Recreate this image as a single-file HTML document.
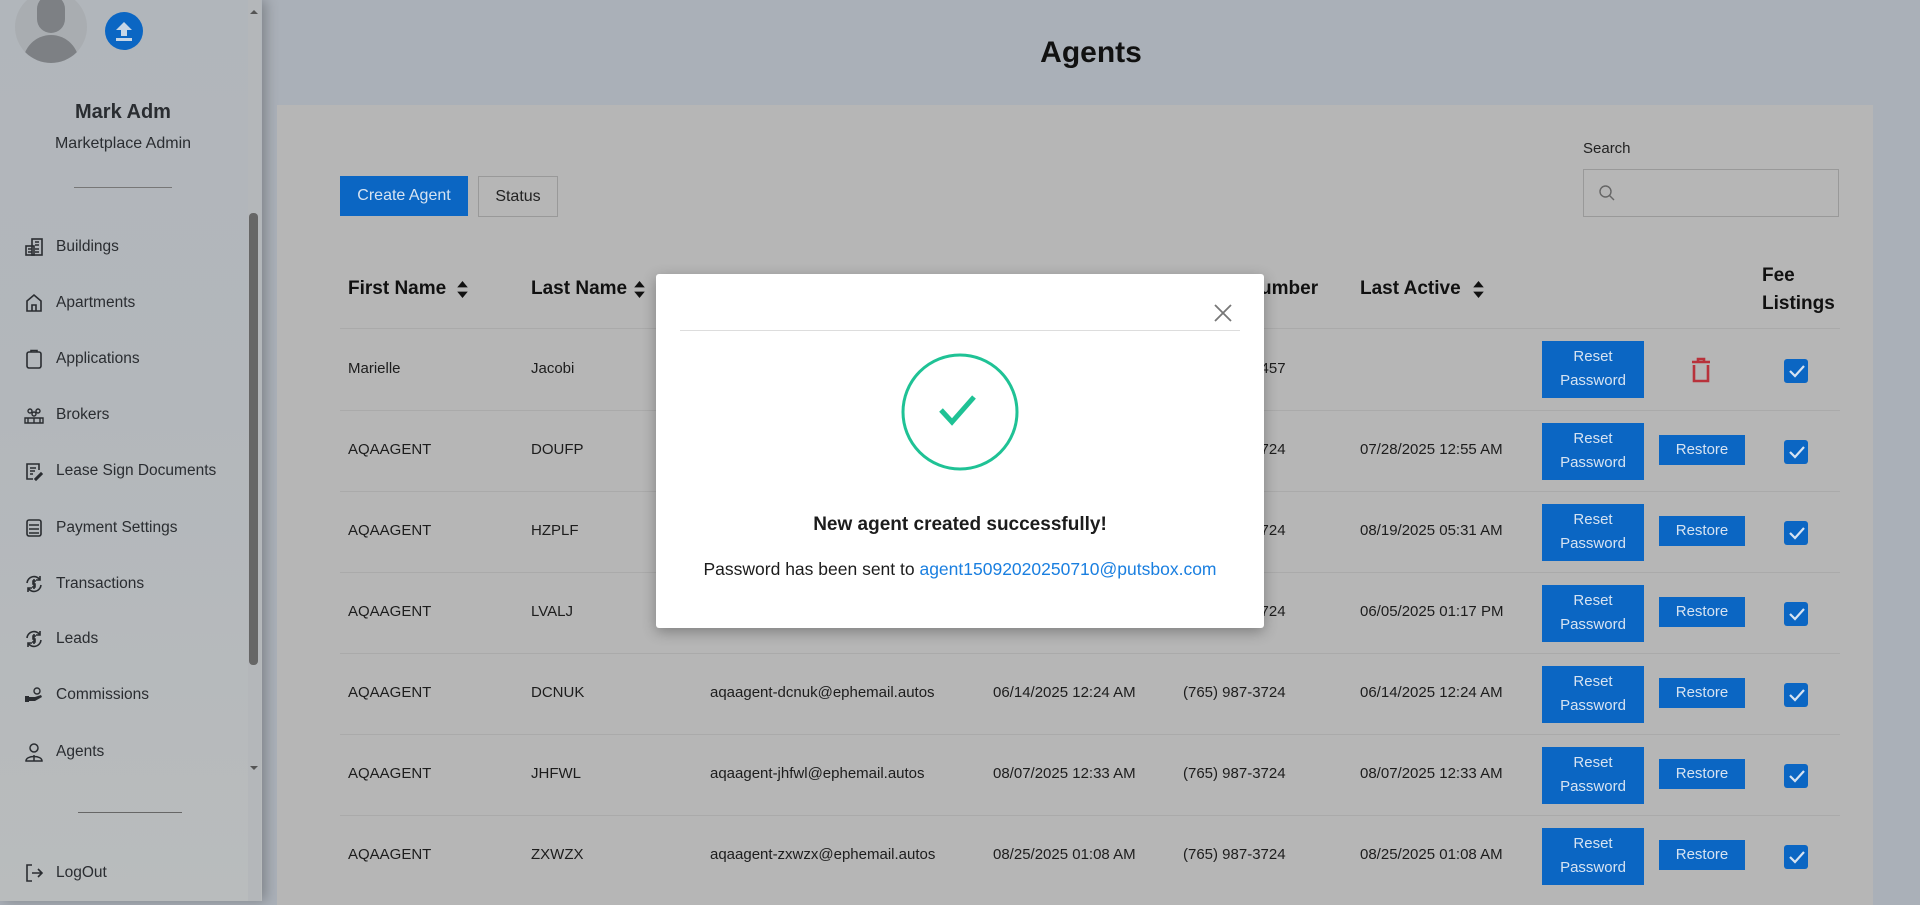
<!DOCTYPE html>
<html><head><meta charset="utf-8"><style>
*{box-sizing:border-box;margin:0;padding:0}
body{width:1920px;height:901px;overflow:hidden;background:#aab0b8;font-family:"Liberation Sans",sans-serif;color:#1c1c1c;position:relative}
.sb{position:absolute;left:0;top:0;width:262px;height:901px;background:linear-gradient(180deg,#b1b6bb 0%,#b3b7bb 45%,#b9bcbd 100%);box-shadow:4px 0 12px rgba(0,0,0,.25)}
.abs{position:absolute}
.mi{position:absolute;left:24px;font-size:15.5px;color:#2a2d31;display:flex;align-items:center}
.mi svg{width:20px;height:20px;margin-right:12px}
.card{position:absolute;left:277px;top:105px;width:1596px;height:800px;background:#b6b6b6}
.th{position:absolute;top:278px;font-size:19px;font-weight:bold;color:#111}
.td{position:absolute;font-size:15px;color:#1d1d1d}
.btn{position:absolute;background:#0b66c3;color:#d6e3f2;font-size:15px;text-align:center}
.rp{width:102px;height:57px;line-height:24px;padding-top:4px}
.rs{width:86px;height:30px;line-height:30px}
.cb{position:absolute;width:24px;height:24px;background:#0b66c3;border-radius:3px}
.hl{position:absolute;left:340px;width:1500px;height:1px;background:#aaa}
</style></head><body>
<div class="sb">
 <div class="abs" style="left:15px;top:-9px;width:72px;height:72px;border-radius:50%;background:#a9adb1;overflow:hidden">
  <div class="abs" style="left:22px;top:4px;width:28px;height:38px;border-radius:14px;background:#7d8084"></div>
  <div class="abs" style="left:8px;top:44px;width:56px;height:40px;border-radius:28px 28px 0 0;background:#7d8084"></div>
 </div>
 <div class="abs" style="left:105px;top:12px;width:38px;height:38px;border-radius:50%;background:#0b66c3">
  <svg width="38" height="38" viewBox="0 0 38 38"><path d="M19 10 L27 18 H22 V24 H16 V18 H11 Z" fill="#c7d6e6"/><rect x="11" y="26" width="16" height="3" fill="#c7d6e6"/></svg>
 </div>
 <div class="abs" style="left:0;width:246px;top:101px;text-align:center;font-size:20px;font-weight:bold;color:#2a2d31">Mark Adm</div>
 <div class="abs" style="left:0;width:246px;top:135px;text-align:center;font-size:16px;color:#2a2d31">Marketplace Admin</div>
 <div class="abs" style="left:74px;top:187px;width:98px;height:1px;background:#777"></div>
 <div class="mi" style="top:237px"><svg viewBox="0 0 20 20" fill="none" stroke="#2a2d31" stroke-width="1.6"><rect x="2" y="9" width="8" height="9"/><rect x="8" y="2" width="10" height="16"/><path d="M11 5h4M11 8h4M4 12h4M4 15h4M11 12h4M11 15h4"/></svg>Buildings</div>
 <div class="mi" style="top:293px"><svg viewBox="0 0 20 20" fill="none" stroke="#2a2d31" stroke-width="1.6"><path d="M3 18V8L10 2L17 8V18ZM8 18V12H12V18"/></svg>Apartments</div>
 <div class="mi" style="top:349px"><svg viewBox="0 0 20 20" fill="none" stroke="#2a2d31" stroke-width="1.6"><rect x="3" y="3" width="14" height="16" rx="2"/><path d="M7 3V1.5H13V3"/></svg>Applications</div>
 <div class="mi" style="top:405px"><svg viewBox="0 0 20 20" fill="none" stroke="#2a2d31" stroke-width="1.4"><circle cx="6" cy="6" r="2"/><circle cx="14" cy="6" r="2"/><circle cx="10" cy="9" r="2"/><path d="M1 18V13H19V18ZM4 13V18M10 13V18M16 13V18"/></svg>Brokers</div>
 <div class="mi" style="top:461px"><svg viewBox="0 0 20 20" fill="none" stroke="#2a2d31" stroke-width="1.6"><path d="M15 9V3H3V18H9M6 7H12M6 10H11M6 13H9M11 18L17 12L18 13L12 19Z"/></svg>Lease Sign Documents</div>
 <div class="mi" style="top:518px"><svg viewBox="0 0 20 20" fill="none" stroke="#2a2d31" stroke-width="1.6"><rect x="3" y="2" width="14" height="16" rx="2"/><path d="M5 7H15M5 11H15M5 15H15"/></svg>Payment Settings</div>
 <div class="mi" style="top:574px"><svg viewBox="0 0 20 20" fill="none" stroke="#2a2d31" stroke-width="1.6"><path d="M3 9A7 7 0 0 1 16 6M17 11A7 7 0 0 1 4 14M16 2V6H12M4 18V14H8M12 7H9V10H11V13H8M10 5V15"/></svg>Transactions</div>
 <div class="mi" style="top:629px"><svg viewBox="0 0 20 20" fill="none" stroke="#2a2d31" stroke-width="1.6"><path d="M3 9A7 7 0 0 1 16 6M17 11A7 7 0 0 1 4 14M16 2V6H12M4 18V14H8M12 7H9V10H11V13H8M10 5V15"/></svg>Leads</div>
 <div class="mi" style="top:685px"><svg viewBox="0 0 20 20" fill="#2a2d31"><rect x="1" y="11" width="4" height="6"/><path d="M5 12H11L17 10L18 12L11 16H5Z"/><circle cx="13" cy="6" r="3" fill="none" stroke="#2a2d31" stroke-width="1.4"/></svg>Commissions</div>
 <div class="mi" style="top:742px"><svg viewBox="0 0 20 20" fill="none" stroke="#2a2d31" stroke-width="1.5"><circle cx="10" cy="6" r="4"/><path d="M2 19C2 13 18 13 18 19ZM10 13V19"/></svg>Agents</div>
 <div class="abs" style="left:78px;top:812px;width:104px;height:1px;background:#666"></div>
 <div class="mi" style="top:863px"><svg viewBox="0 0 20 20" fill="none" stroke="#2a2d31" stroke-width="1.6"><path d="M8 2H3V18H8M8 10H18M14 6L18 10L14 14"/></svg>LogOut</div>
 <div class="abs" style="left:248px;top:0;width:13px;height:901px;background:#b4b7ba"></div>
 <div class="abs" style="left:249px;top:213px;width:9px;height:452px;border-radius:4px;background:#666"></div>
 <div class="abs" style="left:250px;top:6px;width:0;height:0;border:4px solid transparent;border-bottom-color:#555"></div>
 <div class="abs" style="left:250px;top:766px;width:0;height:0;border:4px solid transparent;border-top-color:#555"></div>
</div>
<div class="abs" style="left:262px;width:1658px;top:36px;text-align:center;font-size:30px;font-weight:bold;color:#111">Agents</div>
<div class="card"></div>
<div class="btn" style="left:340px;top:176px;width:128px;height:40px;line-height:40px;font-size:16px">Create Agent</div>
<div class="abs" style="left:478px;top:176px;width:80px;height:41px;border:1px solid #999;text-align:center;line-height:39px;font-size:16px;color:#222">Status</div>
<div class="abs" style="left:1583px;top:140px;font-size:15px;color:#222">Search</div>
<div class="abs" style="left:1583px;top:169px;width:256px;height:48px;border:1px solid #999"><svg class="abs" style="left:14px;top:14px" width="18" height="18" viewBox="0 0 18 18" fill="none" stroke="#666" stroke-width="1.4"><circle cx="7.5" cy="7.5" r="5.5"/><path d="M11.5 11.5L16 16"/></svg></div>

<div class="th" style="left:348px">First Name</div>
<div class="th" style="left:531px">Last Name</div>
<div class="th" style="left:1183px">Phone Number</div>
<div class="th" style="left:1360px">Last Active</div>
<div class="th" style="left:1762px;top:262px;line-height:28px">Fee<br>Listings</div>
<svg class="abs" style="left:456px;top:280px" width="13" height="19" viewBox="0 0 12 18" fill="#111"><path d="M6 1L11 7H1ZM6 17L11 11H1Z"/></svg>
<svg class="abs" style="left:633px;top:280px" width="13" height="19" viewBox="0 0 12 18" fill="#111"><path d="M6 1L11 7H1ZM6 17L11 11H1Z"/></svg>
<svg class="abs" style="left:1472px;top:280px" width="13" height="19" viewBox="0 0 12 18" fill="#111"><path d="M6 1L11 7H1ZM6 17L11 11H1Z"/></svg>
<div class="hl" style="top:328px"></div>
<div class="hl" style="top:410px"></div><div class="hl" style="top:491px"></div><div class="hl" style="top:572px"></div><div class="hl" style="top:653px"></div><div class="hl" style="top:734px"></div><div class="hl" style="top:815px"></div>

<div class="td" style="left:348px;top:360px">Marielle</div><div class="td" style="left:531px;top:360px">Jacobi</div><div class="td" style="left:1183px;top:360px">(765) 987-6457</div>
<div class="btn rp" style="left:1542px;top:341px">Reset<br>Password</div>
<svg class="abs" style="left:1690px;top:357px" width="22" height="26" viewBox="0 0 22 26" fill="none" stroke="#b8323b" stroke-width="2.6"><path d="M2 5H20M8 5V2H14V5M4 8V24H18V8"/></svg>
<div class="cb" style="left:1784px;top:359px"></div>

<div class="td" style="left:348px;top:441px">AQAAGENT</div><div class="td" style="left:531px;top:441px">DOUFP</div><div class="td" style="left:1183px;top:441px">(765) 987-3724</div><div class="td" style="left:1360px;top:441px">07/28/2025 12:55 AM</div>
<div class="btn rp" style="left:1542px;top:423px">Reset<br>Password</div><div class="btn rs" style="left:1659px;top:435px">Restore</div><div class="cb" style="left:1784px;top:440px"></div>

<div class="td" style="left:348px;top:522px">AQAAGENT</div><div class="td" style="left:531px;top:522px">HZPLF</div><div class="td" style="left:1183px;top:522px">(765) 987-3724</div><div class="td" style="left:1360px;top:522px">08/19/2025 05:31 AM</div>
<div class="btn rp" style="left:1542px;top:504px">Reset<br>Password</div><div class="btn rs" style="left:1659px;top:516px">Restore</div><div class="cb" style="left:1784px;top:521px"></div>

<div class="td" style="left:348px;top:603px">AQAAGENT</div><div class="td" style="left:531px;top:603px">LVALJ</div><div class="td" style="left:1183px;top:603px">(765) 987-3724</div><div class="td" style="left:1360px;top:603px">06/05/2025 01:17 PM</div>
<div class="btn rp" style="left:1542px;top:585px">Reset<br>Password</div><div class="btn rs" style="left:1659px;top:597px">Restore</div><div class="cb" style="left:1784px;top:602px"></div>

<div class="td" style="left:348px;top:684px">AQAAGENT</div><div class="td" style="left:531px;top:684px">DCNUK</div><div class="td" style="left:710px;top:684px">aqaagent-dcnuk@ephemail.autos</div><div class="td" style="left:993px;top:684px">06/14/2025 12:24 AM</div><div class="td" style="left:1183px;top:684px">(765) 987-3724</div><div class="td" style="left:1360px;top:684px">06/14/2025 12:24 AM</div>
<div class="btn rp" style="left:1542px;top:666px">Reset<br>Password</div><div class="btn rs" style="left:1659px;top:678px">Restore</div><div class="cb" style="left:1784px;top:683px"></div>

<div class="td" style="left:348px;top:765px">AQAAGENT</div><div class="td" style="left:531px;top:765px">JHFWL</div><div class="td" style="left:710px;top:765px">aqaagent-jhfwl@ephemail.autos</div><div class="td" style="left:993px;top:765px">08/07/2025 12:33 AM</div><div class="td" style="left:1183px;top:765px">(765) 987-3724</div><div class="td" style="left:1360px;top:765px">08/07/2025 12:33 AM</div>
<div class="btn rp" style="left:1542px;top:747px">Reset<br>Password</div><div class="btn rs" style="left:1659px;top:759px">Restore</div><div class="cb" style="left:1784px;top:764px"></div>

<div class="td" style="left:348px;top:846px">AQAAGENT</div><div class="td" style="left:531px;top:846px">ZXWZX</div><div class="td" style="left:710px;top:846px">aqaagent-zxwzx@ephemail.autos</div><div class="td" style="left:993px;top:846px">08/25/2025 01:08 AM</div><div class="td" style="left:1183px;top:846px">(765) 987-3724</div><div class="td" style="left:1360px;top:846px">08/25/2025 01:08 AM</div>
<div class="btn rp" style="left:1542px;top:828px">Reset<br>Password</div><div class="btn rs" style="left:1659px;top:840px">Restore</div><div class="cb" style="left:1784px;top:845px"></div>

<svg class="abs" style="left:0;top:0" width="1920" height="901">
 <g fill="none" stroke="#d6e3f2" stroke-width="2.2">
  <path d="M1790 371l5 5 9-10"/><path d="M1790 452l5 5 9-10"/><path d="M1790 533l5 5 9-10"/><path d="M1790 614l5 5 9-10"/><path d="M1790 695l5 5 9-10"/><path d="M1790 776l5 5 9-10"/><path d="M1790 857l5 5 9-10"/>
 </g>
</svg>

<div class="abs" style="left:656px;top:274px;width:608px;height:354px;background:#fff;border-radius:3px;box-shadow:0 4px 14px rgba(0,0,0,.3)">
 <svg class="abs" style="left:558px;top:30px" width="18" height="18" viewBox="0 0 18 18" stroke="#777" stroke-width="1.8"><path d="M1 1L17 17M17 1L1 17"/></svg>
 <div class="abs" style="left:24px;top:56px;width:560px;height:1px;background:#ddd"></div>
 <svg class="abs" style="left:244px;top:78px" width="120" height="120" viewBox="0 0 120 120" fill="none" stroke="#1fc295" stroke-width="3"><circle cx="60" cy="60" r="57"/><path d="M41 58L52 70L74 45" stroke-width="5"/></svg>
 <div class="abs" style="left:0;width:608px;top:240px;text-align:center;font-size:19px;font-weight:bold;color:#1c1c1c">New agent created successfully!</div>
 <div class="abs" style="left:0;width:608px;top:285px;text-align:center;font-size:17.5px;color:#1c1c1c">Password has been sent to <span style="color:#1a7fe0">agent15092020250710@putsbox.com</span></div>
</div>
</body></html>
